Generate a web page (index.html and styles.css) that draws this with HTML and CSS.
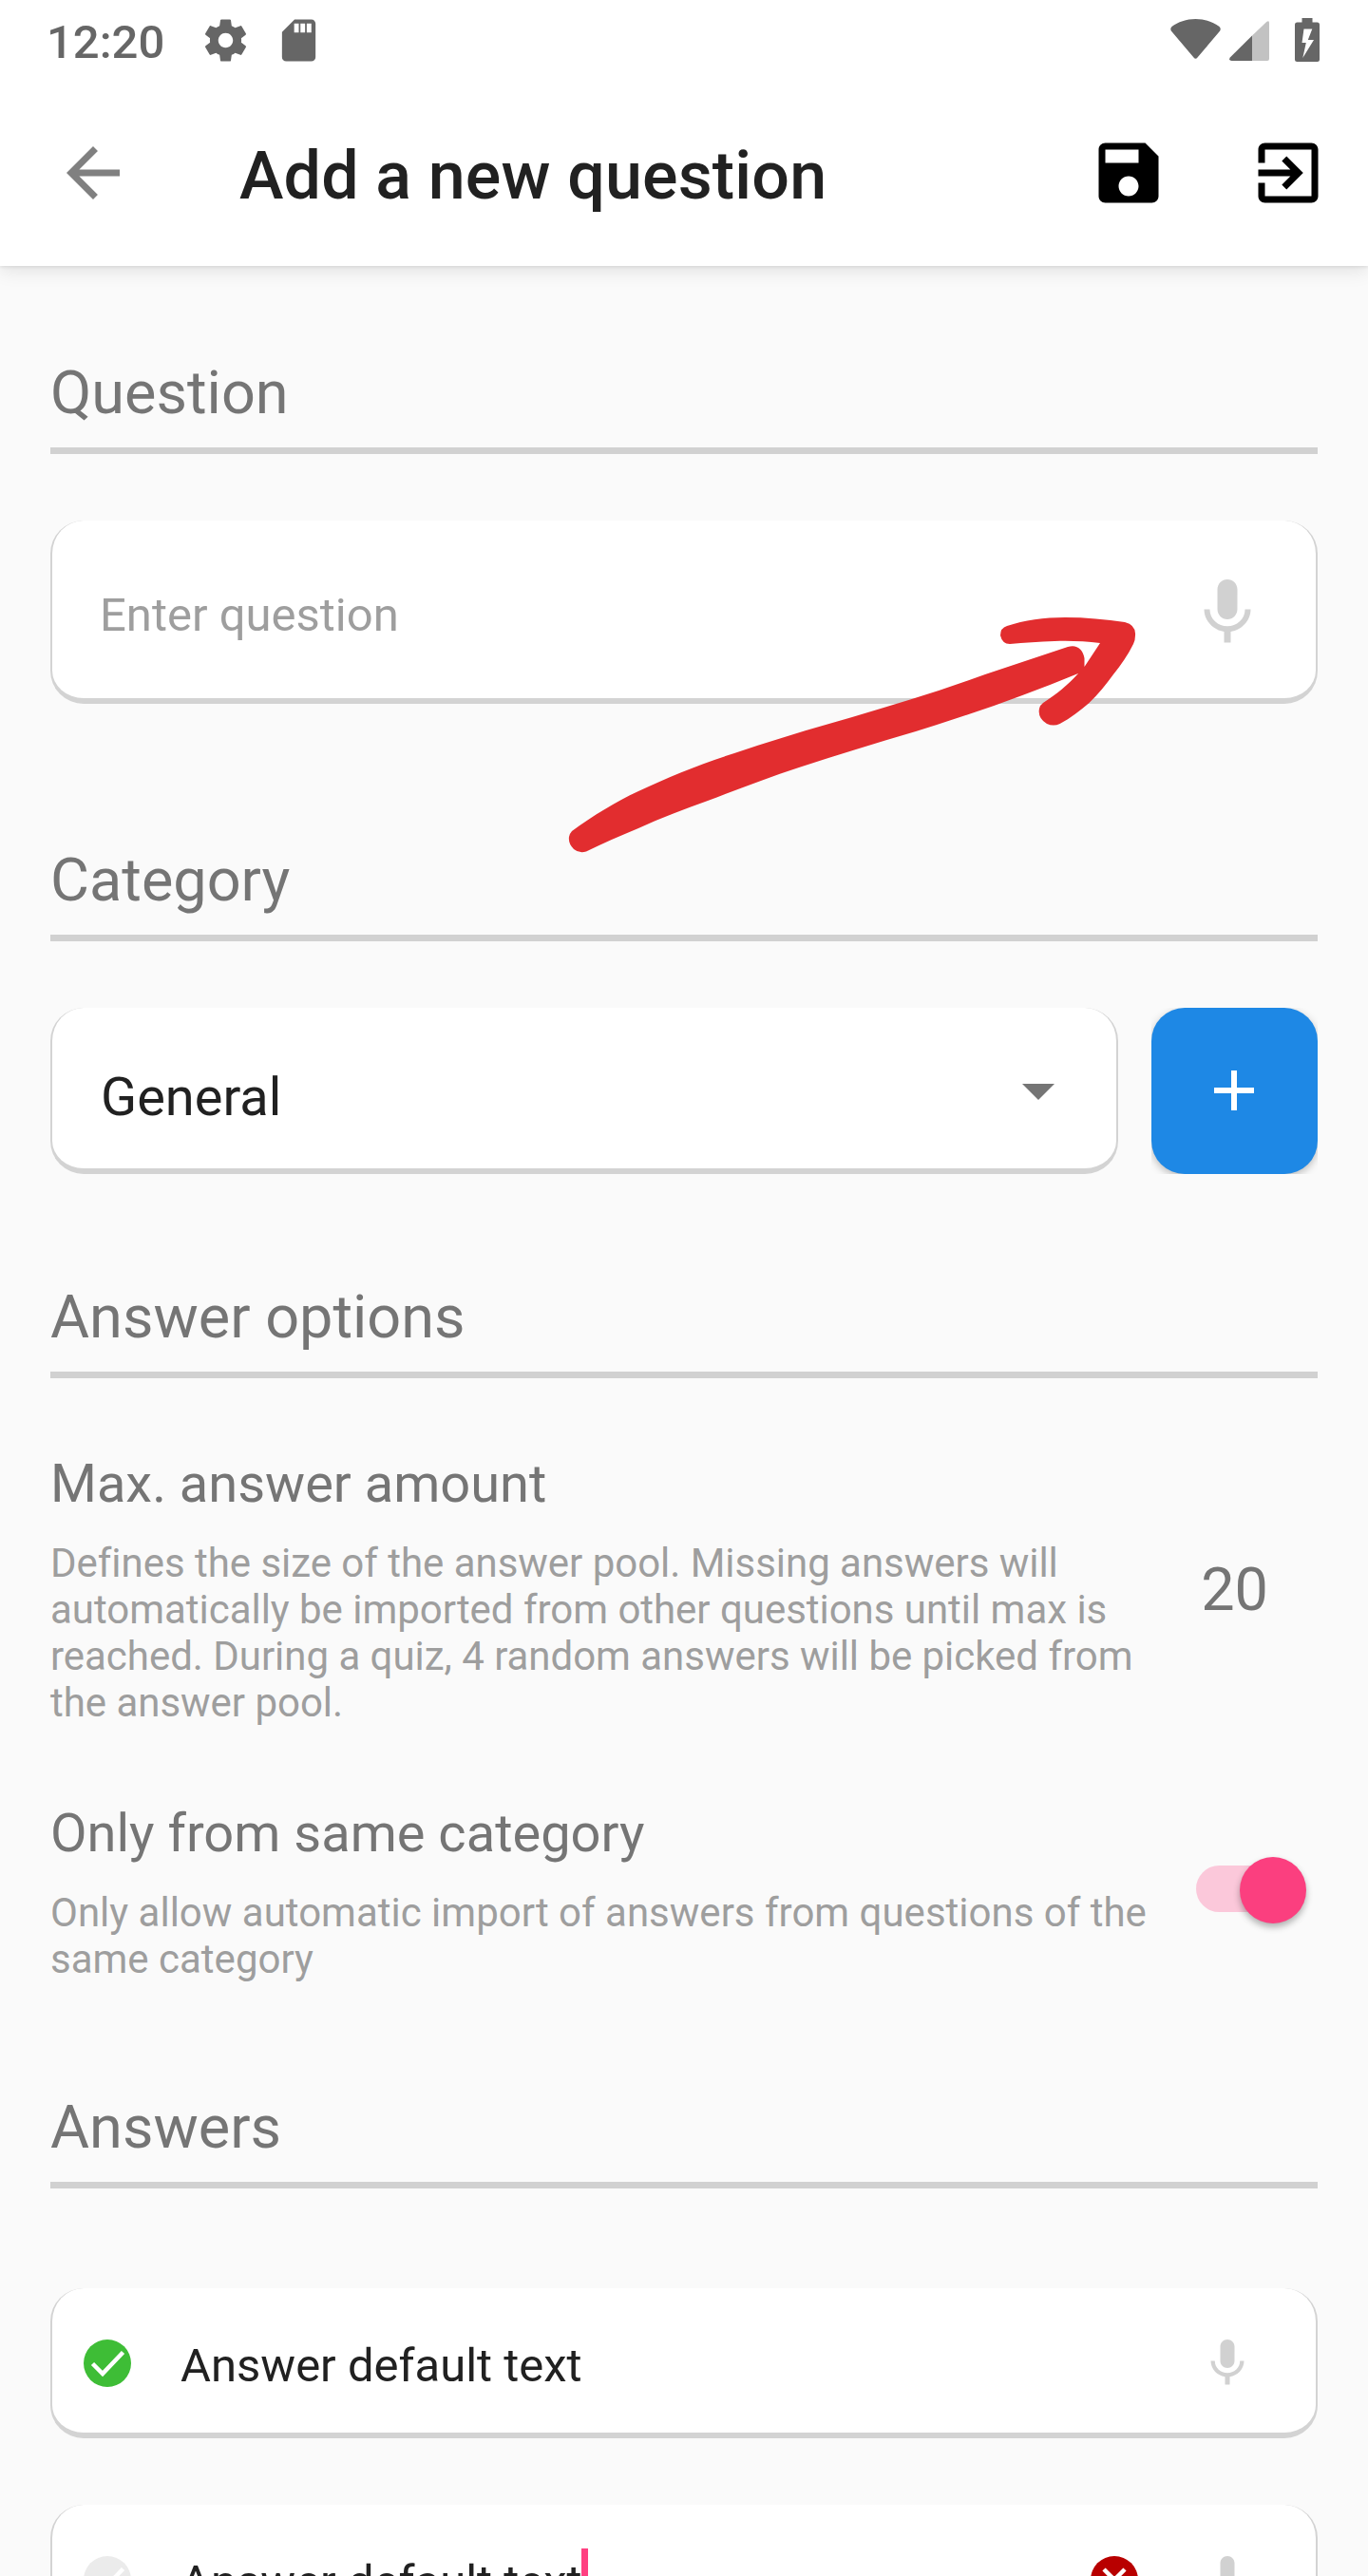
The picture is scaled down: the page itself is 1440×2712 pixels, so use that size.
FILE: index.html
```html
<!DOCTYPE html>
<html lang="en">
<head>
<meta charset="utf-8">
<title>Add a new question</title>
<link rel="stylesheet" href="styles.css">
</head>
<body>
<svg class="defs" aria-hidden="true">
  <symbol id="mic" viewBox="0 0 24 24"><path d="M12 14c1.66 0 2.99-1.34 2.99-3L15 5c0-1.66-1.34-3-3-3S9 3.34 9 5v6c0 1.66 1.34 3 3 3zm5.3-3c0 3-2.54 5.1-5.3 5.1S6.7 14 6.7 11H5c0 3.41 2.72 6.23 6 6.72V21h2v-3.28c3.28-.48 6-3.3 6-6.72h-1.7z"/></symbol>
  <symbol id="check" viewBox="0 0 60 60"><circle cx="30" cy="30" r="25"/><path d="M14.500 30.500l10.500 10.500l21.500-22.500" fill="none" stroke="#fff" stroke-width="4.500"/></symbol>
</svg>
<div class="screen">
  <header class="top">
    <div class="status">
      <span class="clock">12:20</span>
      <svg class="st-gear" viewBox="0 0 24 24"><path d="M19.430 12.980c.04-.32.07-.64.07-.98s-.03-.66-.07-.98l2.110-1.650c.19-.15.24-.42.12-.64l-2-3.460c-.12-.22-.39-.3-.61-.22l-2.490 1c-.52-.4-1.080-.73-1.690-.98l-.38-2.650C14.460 2.180 14.250 2 14 2h-4c-.25 0-.46.18-.49.42l-.38 2.650c-.61.25-1.170.59-1.690.98l-2.490-1c-.23-.09-.49 0-.61.22l-2 3.460c-.13.22-.07.49.12.64l2.110 1.650c-.04.32-.07.65-.07.98s.03.66.07.98l-2.110 1.650c-.19.15-.24.42-.12.64l2 3.460c.12.22.39.3.61.22l2.490-1c.52.4 1.080.73 1.690.98l.38 2.650c.03.24.24.42.49.42h4c.25 0 .46-.18.49-.42l.38-2.650c.61-.25 1.170-.59 1.690-.98l2.490 1c.23.09.49 0 .61-.22l2-3.460c.12-.22.07-.49-.12-.64l-2.110-1.650zM12 15.500c-1.930 0-3.500-1.570-3.500-3.500s1.570-3.500 3.500-3.500 3.500 1.570 3.500 3.500-1.570 3.500-3.500 3.500z"/></svg>
      <svg class="st-sd" viewBox="0 0 24 24"><path d="M18 2h-8L4.020 8 4 20c0 1.100.9 2 2 2h12c1.100 0 2-.9 2-2V4c0-1.100-.9-2-2-2zm-6 6.300H9.800V4H12v4.300zm3 0h-2.200V4H15v4.300zm3 0h-2.200V4H18v4.300z"/></svg>
      <span class="spacer"></span>
      <svg class="st-wifi" viewBox="0 0 53 42"><path d="M26.500 0C17 0 8 3 1.500 8Q-.5 10 .8 12.500L24.500 40.500q2 2.500 4 0L52.200 12.500q1.300-2.500-.7-4.500C45 3 36 0 26.500 0z"/></svg>
      <svg class="st-signal" viewBox="0 0 42 42"><path d="M24 15.500L39.500.8Q42-.8 42 2V40q0 2-2 2H24z" opacity=".4"/><path d="M24 15.500V42H2.500Q-1 41.500.8 38.500z"/></svg>
      <svg class="st-battery" viewBox="0 0 26 46"><path fill-rule="evenodd" d="M7.500 0h11v4.500H23.500Q26 4.500 26 7V43.500Q26 46 23.500 46H2.500Q0 46 0 43.500V7Q0 4.500 2.500 4.500H7.500zM9.500 11.500L7.500 26H11.800L8.300 42L20 23H13.800L18.300 11.500z"/></svg>
    </div>
    <div class="appbar">
      <svg class="icon back" viewBox="0 0 24 24"><path d="M20 11H7.830l5.590-5.590L12 4l-8 8 8 8 1.410-1.410L7.830 13H20v-2z"/></svg>
      <h1 class="title">Add a new question</h1>
      <svg class="icon save" viewBox="0 0 24 24"><path d="M17 3H5c-1.110 0-2 .9-2 2v14c0 1.100.89 2 2 2h14c1.100 0 2-.9 2-2V7l-4-4zm-5 16c-1.660 0-3-1.340-3-3s1.340-3 3-3 3 1.340 3 3-1.340 3-3 3zm3-10H5V5h10v4z"/></svg>
      <svg class="icon" viewBox="0 0 24 24"><path d="M10.090 15.590L11.500 17l5-5-5-5-1.410 1.410L12.670 11H3v2h9.670l-2.580 2.590zM19 3H5c-1.110 0-2 .9-2 2v4h2V5h14v14H5v-4H3v4c0 1.100.89 2 2 2h14c1.100 0 2-.9 2-2V5c0-1.100-.9-2-2-2z"/></svg>
    </div>
  </header>
  <main class="content">
    <section class="section">
      <h2 class="heading">Question</h2>
      <div class="card question">
        <span class="placeholder">Enter question</span>
        <svg class="icon mic"><use href="#mic"/></svg>
      </div>
    </section>
    <section class="section category">
      <h2 class="heading">Category</h2>
      <div class="category-row">
        <div class="card select">
          <span class="value">General</span>
          <svg class="caret" viewBox="0 0 34 17"><path d="M0 0h34L17 17z"/></svg>
        </div>
        <div class="add-clip"><button class="add" aria-label="Add category"><svg viewBox="0 0 42 42"><path d="M18 0h6v18h18v6H24v18h-6V24H0v-6h18z"/></svg></button></div>
      </div>
    </section>
    <section class="section options">
      <h2 class="heading">Answer options</h2>
      <div class="option">
        <div class="option-text">
          <h3 class="option-title">Max. answer amount</h3>
          <p class="option-desc">Defines the size of the answer pool. Missing answers will automatically be imported from other questions until max is reached. During a quiz, 4 random answers will be picked from the answer pool.</p>
        </div>
        <span class="amount">20</span>
      </div>
      <div class="option">
        <div class="option-text">
          <h3 class="option-title">Only from same category</h3>
          <p class="option-desc">Only allow automatic import of answers from questions of the same category</p>
        </div>
        <div class="switch"><span class="thumb"></span></div>
      </div>
    </section>
    <section class="section answers">
      <h2 class="heading">Answers</h2>
      <div class="answer-list">
        <div class="card answer">
          <svg class="small correct"><use href="#check"/></svg>
          <span class="answer-text">Answer default text</span>
          <svg class="small mic"><use href="#mic"/></svg>
        </div>
        <div class="card answer">
          <svg class="small unset"><use href="#check"/></svg>
          <span class="answer-text">Answer default text</span><span class="cursor"></span>
          <svg class="small remove" viewBox="0 0 60 60"><circle cx="30" cy="30" r="25"/><path d="M19 19l22 22M41 19L19 41" stroke="#fff" stroke-width="4.500"/></svg>
          <svg class="small mic"><use href="#mic"/></svg>
        </div>
      </div>
    </section>
  </main>
  <svg class="pointer" viewBox="598 648 600 252"><path d="M602 875C624 859 648 844 672 833C704 818 738 804 773 793C814 779 855 767 897 755C945 741 991 727 1037 710L1124 681C1133 678 1140 683 1141.500 693V702L1158 677C1142 675 1126 674.500 1110 675C1094 675.500 1078 676.500 1063 678Q1055 678 1053 669Q1053 661 1060 659C1078 653 1099 650 1121 650C1143 650 1164 652 1184 655Q1196 658 1195 669Q1195 674 1193 678C1187 690 1180 700 1172 710C1164 721 1156 731 1146.500 740C1137 748 1127 756 1115.600 762Q1109 765 1102 762Q1092 756 1094 746Q1095 742 1098 740C1112 731 1124 721 1135 709C1080 732 1022 752 964 770C922 782 881 795 841 808C808 819 776 831 745 843C720 852 696 861 672 872C653 880 634 888 617 896.500Q610 899 604 894Q598 888 599 881Q600 877 602 875Z"/></svg>
</div>
</body>
</html>
```
FILE: styles.css
```css
* { box-sizing: border-box; margin: 0; padding: 0; }
body { background: #fafafa; font-family: Roboto, "Liberation Sans", sans-serif; }
svg { display: block; flex: none; }
.defs { position: absolute; width: 0; height: 0; }
.screen { position: relative; width: 1440px; height: 2712px; overflow: hidden; background: #fafafa; }

.top { height: 280px; background: #fff; box-shadow: 0 6px 18px rgba(0,0,0,.09), 0 1px 4px rgba(0,0,0,.1); }
.status { display: flex; align-items: flex-start; height: 84px; padding: 0 51px 0 49px; fill: #666; color: #666; }
.clock { width: 162px; margin-top: 16px; font-size: 49px; line-height: 57px; font-weight: 500; }
.st-gear { width: 53px; height: 53px; margin-top: 15.500px; }
.st-sd { width: 53px; height: 53px; margin: 15.500px 0 0 24px; }
.spacer { flex: 1; }
.st-wifi { width: 53px; height: 42px; margin-top: 20px; }
.st-signal { width: 42px; height: 42px; margin: 22px 27px 0 9px; }
.st-battery { width: 26px; height: 46px; margin-top: 19px; }

.appbar { display: flex; align-items: center; height: 196px; padding: 0 42px 0 56px; }
.icon { width: 84px; height: 84px; }
.back { fill: #808080; }
.title { flex: 1; margin-left: 112px; padding-top: 6px; font-size: 70px; line-height: 82px; font-weight: 500; letter-spacing: .15px; color: #212121; white-space: nowrap; }
.save { margin-right: 84px; }

.content { padding: 96px 53px 0; }
.section { display: flex; flex-direction: column; }
.heading { height: 102px; padding-top: 1px; border-bottom: 7px solid #d1d1d1; font-size: 63px; line-height: 74px; font-weight: 400; color: #757575; }
.card { display: flex; align-items: center; background: #fff; border: solid #d3d3d3; border-width: 0 2px 6px; border-radius: 35px; }
.mic { fill: #d1d1d1; }

.question { height: 193px; margin-top: 70px; padding: 0 51px 0 50px; justify-content: space-between; }
.question .mic { margin-top: 6px; }
.placeholder { padding-top: 11px; font-size: 49px; line-height: 57px; color: #9e9e9e; }

.category { margin-top: 148px; }
.category-row { display: flex; justify-content: space-between; margin-top: 70px; }
.select { width: 1124px; height: 175px; padding: 0 65px 0 51px; justify-content: space-between; }
.value { padding-top: 18px; font-size: 56px; line-height: 66px; color: #212121; }
.caret { width: 34px; height: 17px; margin-top: 8px; fill: #757575; }
.add-clip { width: 175px; height: 175px; overflow: hidden; }
.add { display: flex; align-items: center; justify-content: center; width: 175px; height: 175px; padding: 0 1px 1px 0; border: 0; border-radius: 35px; background: #1e88e5; box-shadow: 0 3px 8px rgba(0,0,0,.25); }
.add svg { width: 42px; height: 42px; fill: #fff; }

.options { margin-top: 113px; }
.option { display: flex; justify-content: space-between; margin-top: 78px; }
.option + .option { margin-top: 80px; }
.option-text { width: 1160px; }
.option-title { font-size: 56px; line-height: 66px; font-weight: 400; color: #757575; }
.option-desc { margin-top: 26px; font-size: 42px; line-height: 49px; letter-spacing: -.03px; color: #9e9e9e; }
.option + .option .option-desc { letter-spacing: 0; }
.amount { align-self: center; margin: 2px 52px 0 0; font-size: 63px; line-height: 74px; color: #757575; }
.switch { display: flex; align-items: center; justify-content: flex-end; width: 112px; height: 49px; margin: 67px 16px 0 0; border-radius: 25px; background: #fbc8da; }
.thumb { flex: none; width: 70px; height: 70px; margin: 3px -4px 0 0; border-radius: 50%; background: #fb3f7f; box-shadow: 0 4px 7px rgba(0,0,0,.3); }

.answers { margin-top: 115px; }
.answer-list { display: flex; flex-direction: column; gap: 70px; margin-top: 105px; }
.answer { height: 158px; padding: 6px 63px 0 28px; }
.small { width: 60px; height: 60px; }
.answer-text { margin-left: 47px; padding-top: 4px; font-size: 49px; line-height: 57px; color: #212121; white-space: nowrap; }
.answer .mic { margin-left: auto; }
.remove { margin-left: auto; fill: #b80000; }
.answer .remove + .mic { margin-left: 59px; }
.correct { fill: #3ebd36; }
.unset { fill: #ebebeb; }
.cursor { width: 7px; height: 66px; margin-left: -1px; background: #ff4081; }

.pointer { position: absolute; left: 598px; top: 648px; width: 600px; height: 252px; fill: #e22d2f; }
```
